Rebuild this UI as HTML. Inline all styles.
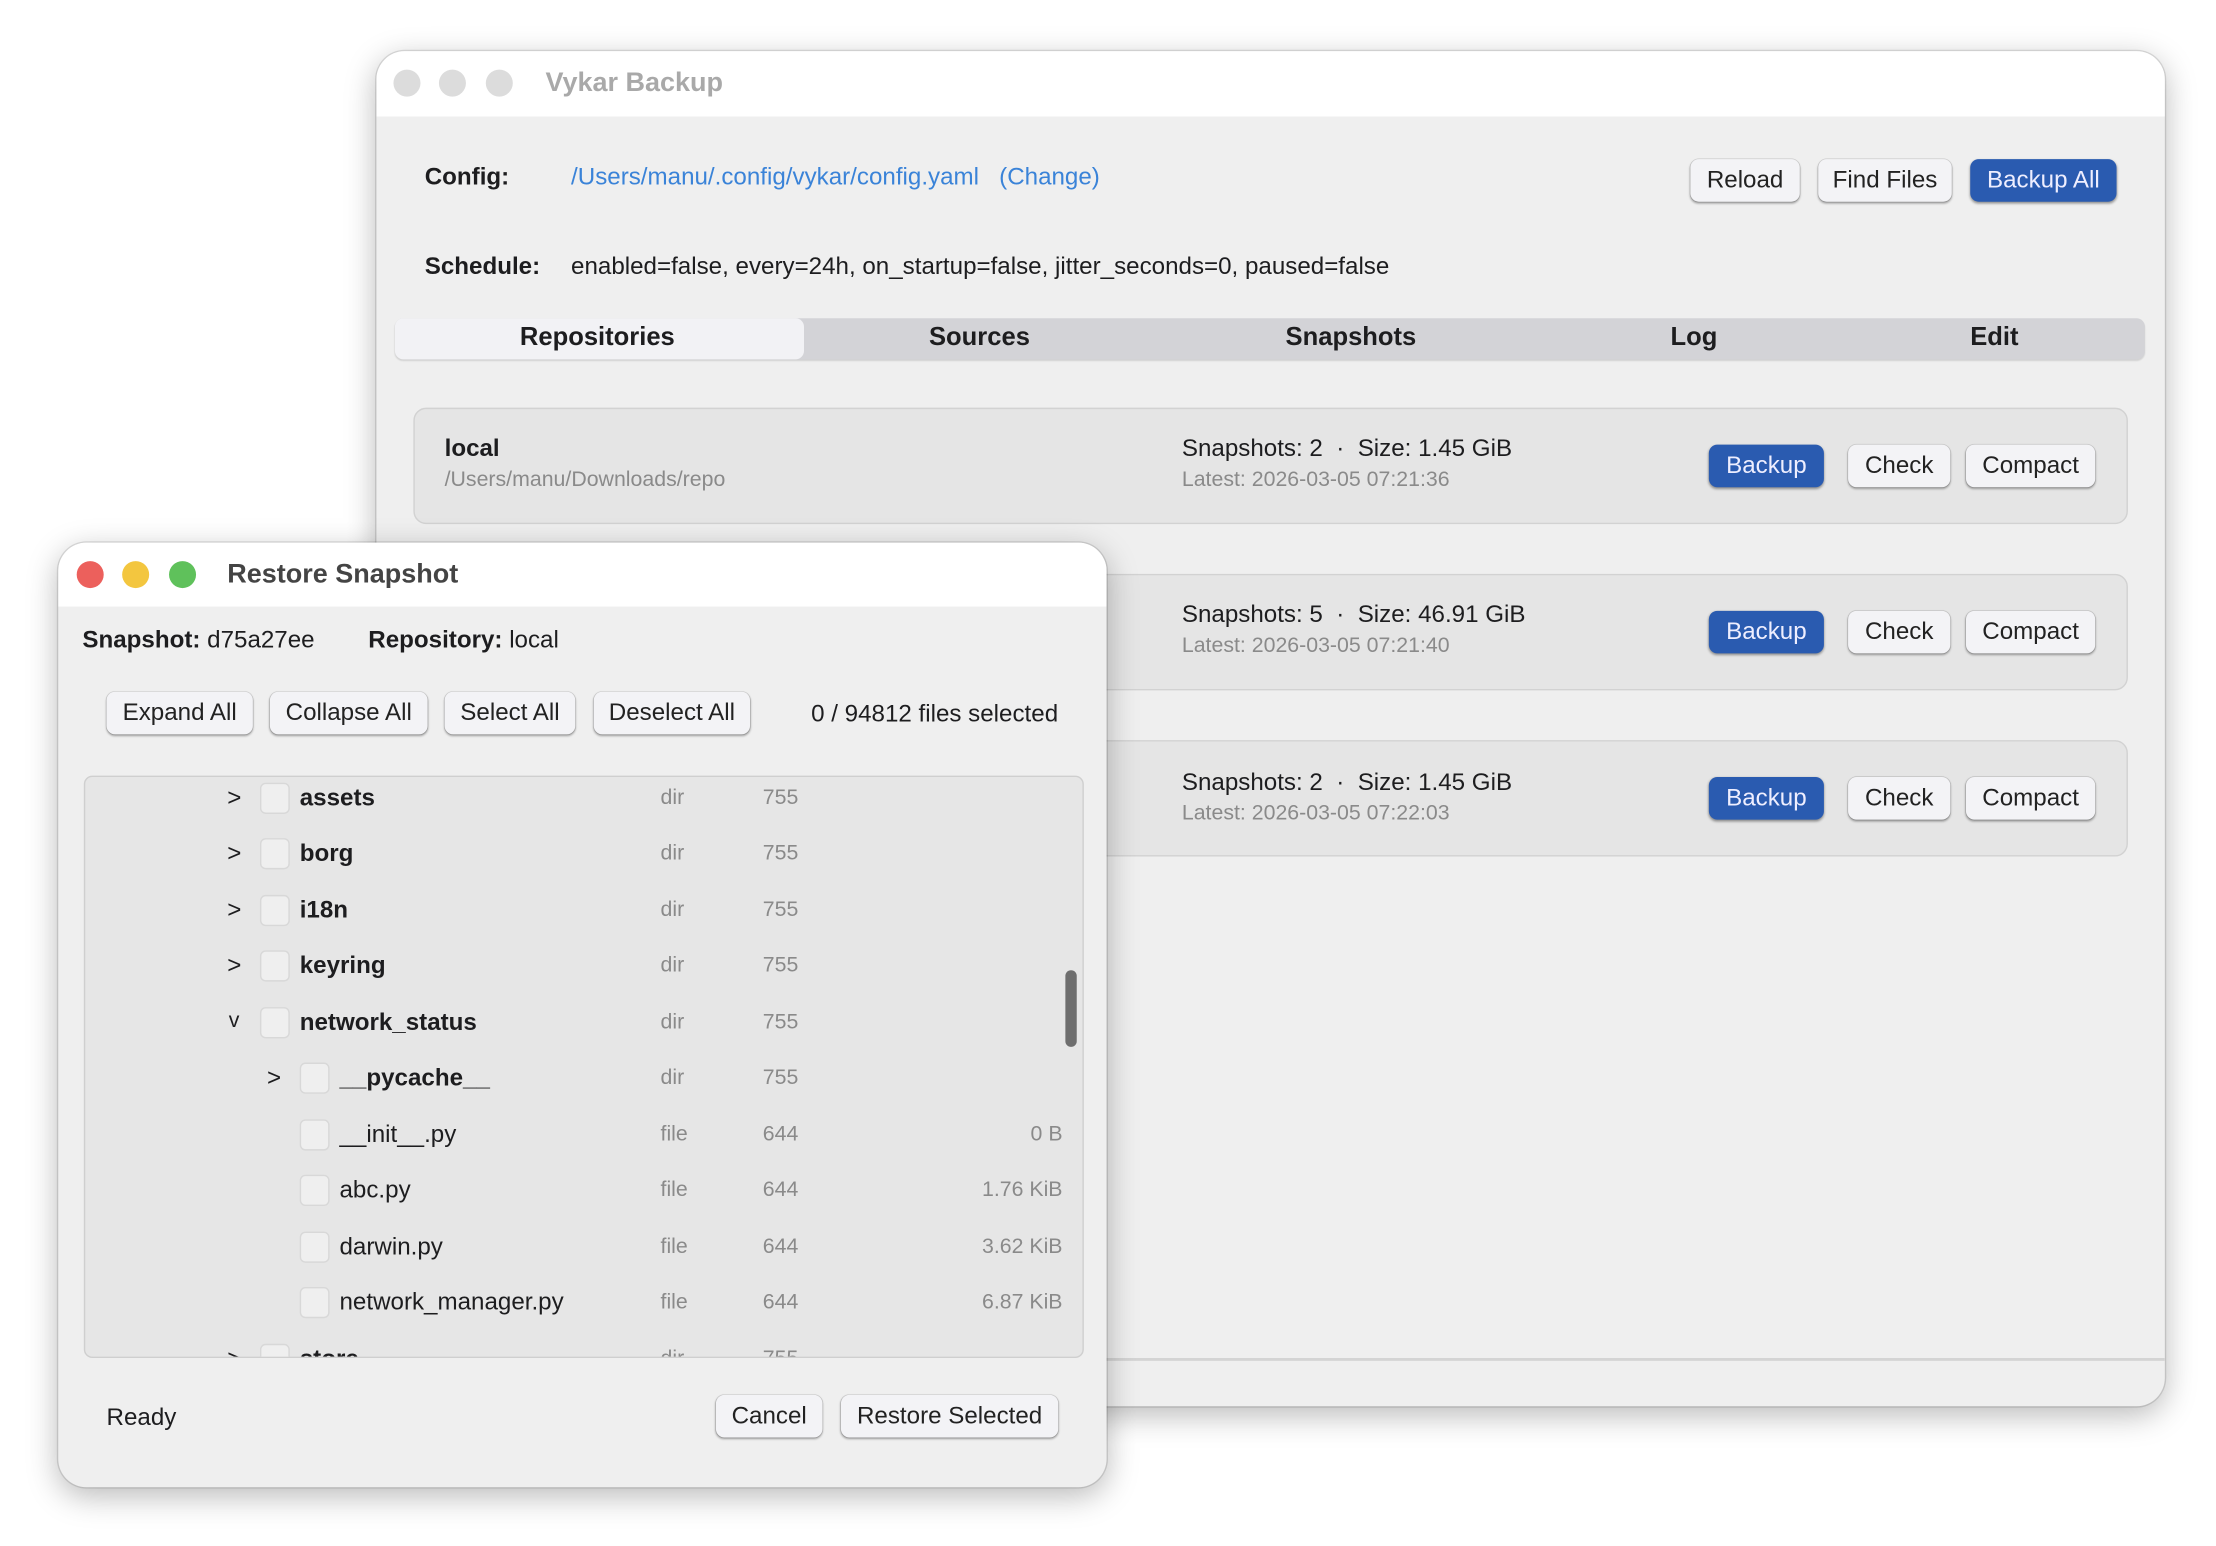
<!DOCTYPE html>
<html><head><meta charset="utf-8"><style>
*{box-sizing:border-box;margin:0;padding:0}
html,body{width:2216px;height:1546px;background:#fff;overflow:hidden}
#s{position:absolute;left:0;top:0;width:1560px;height:1088px;transform:scale(1.4205);transform-origin:0 0;font-family:"Liberation Sans",sans-serif;color:#1d1d1f}
.a{position:absolute;white-space:nowrap}
.win{position:absolute;background:#efefef;border-radius:20px;overflow:hidden;box-shadow:0 6px 22px rgba(0,0,0,.28),0 0 0 1px rgba(0,0,0,.12)}
.tb{position:absolute;left:0;top:0;right:0;background:#fff}
.dot{position:absolute;width:19px;height:19px;border-radius:50%}
.btn{position:absolute;height:30px;border-radius:6px;background:#f3f3f6;box-shadow:0 1px 1.5px rgba(0,0,0,.35),0 0 0 .5px rgba(0,0,0,.12);font-size:17px;line-height:30px;text-align:center;color:#222}
.blue{background:#2a5bb0;color:#eef;box-shadow:0 1px 2px rgba(0,0,0,.4)}
.card{position:absolute;left:26px;width:1207px;height:82px;background:#e5e5e5;border:1.5px solid #d2d2d2;border-radius:9px}
.b{font-weight:bold}
.g{color:#8a8a8a}
.cb{position:absolute;width:21px;height:22px;border-radius:4px;background:#efefef;border:1px solid #d8d8d8}
.row{position:absolute;left:0;width:700px;height:40px;font-size:17px}
</style></head><body><div id="s">

<div class="win" style="left:265px;top:36px;width:1259px;height:954px">
 <div class="tb" style="height:46px"></div>
 <div class="dot" style="left:12px;top:13px;background:#dcdcdc"></div>
 <div class="dot" style="left:44px;top:13px;background:#dcdcdc"></div>
 <div class="dot" style="left:77px;top:13px;background:#dcdcdc"></div>
 <div class="a b" style="left:119px;top:12px;font-size:19px;color:#a9a9a9">Vykar Backup</div>
 <div class="a b" style="left:34px;top:79px;font-size:17px">Config:</div>
 <div class="a" style="left:137px;top:79px;font-size:17px;color:#3a83d8">/Users/manu/.config/vykar/config.yaml&nbsp;&nbsp;&nbsp;(Change)</div>
 <div class="btn" style="left:925px;top:76px;width:77px">Reload</div>
 <div class="btn" style="left:1015px;top:76px;width:94px">Find Files</div>
 <div class="btn blue" style="left:1122px;top:76px;width:103px">Backup All</div>
 <div class="a b" style="left:34px;top:142px;font-size:17px">Schedule:</div>
 <div class="a" style="left:137px;top:142px;font-size:17px">enabled=false, every=24h, on_startup=false, jitter_seconds=0, paused=false</div>
 <div class="a" style="left:13px;top:188px;width:1232px;height:29px;background:#d3d3d7;border-radius:6px;box-shadow:0 1px 1px rgba(0,0,0,.12)"></div>
 <div class="a" style="left:13px;top:188px;width:288px;height:29px;background:#f2f2f5;border-radius:6px"></div>
 <div class="a b" style="left:101px;top:191px;font-size:18px">Repositories</div>
 <div class="a b" style="left:389px;top:191px;font-size:18px">Sources</div>
 <div class="a b" style="left:640px;top:191px;font-size:18px">Snapshots</div>
 <div class="a b" style="left:911px;top:191px;font-size:18px">Log</div>
 <div class="a b" style="left:1122px;top:191px;font-size:18px">Edit</div>

 <div class="card" style="top:251px"></div>
 <div class="card" style="top:368px"></div>
 <div class="card" style="top:485px"></div>
 <div class="a b" style="left:48px;top:270px;font-size:17px">local</div>
 <div class="a g" style="left:48px;top:293px;font-size:15px">/Users/manu/Downloads/repo</div>

 <div class="a" style="left:567px;top:270px;font-size:17px">Snapshots: 2 &nbsp;·&nbsp; Size: 1.45 GiB</div>
 <div class="a g" style="left:567px;top:293px;font-size:15px">Latest: 2026-03-05 07:21:36</div>
 <div class="a" style="left:567px;top:387px;font-size:17px">Snapshots: 5 &nbsp;·&nbsp; Size: 46.91 GiB</div>
 <div class="a g" style="left:567px;top:410px;font-size:15px">Latest: 2026-03-05 07:21:40</div>
 <div class="a" style="left:567px;top:505px;font-size:17px">Snapshots: 2 &nbsp;·&nbsp; Size: 1.45 GiB</div>
 <div class="a g" style="left:567px;top:528px;font-size:15px">Latest: 2026-03-05 07:22:03</div>

 <div class="btn blue" style="left:938px;top:277px;width:81px">Backup</div>
 <div class="btn" style="left:1036px;top:277px;width:72px">Check</div>
 <div class="btn" style="left:1119px;top:277px;width:91px">Compact</div>
 <div class="btn blue" style="left:938px;top:394px;width:81px">Backup</div>
 <div class="btn" style="left:1036px;top:394px;width:72px">Check</div>
 <div class="btn" style="left:1119px;top:394px;width:91px">Compact</div>
 <div class="btn blue" style="left:938px;top:511px;width:81px">Backup</div>
 <div class="btn" style="left:1036px;top:511px;width:72px">Check</div>
 <div class="btn" style="left:1119px;top:511px;width:91px">Compact</div>
 <div class="a" style="left:0;top:920px;width:1259px;height:1.5px;background:#d4d4d4"></div>
</div>

<div class="win" style="left:41px;top:382px;width:738px;height:665px">
 <div class="tb" style="height:45px"></div>
 <div class="dot" style="left:13px;top:13px;background:#ec605c"></div>
 <div class="dot" style="left:45px;top:13px;background:#f3c63f"></div>
 <div class="dot" style="left:78px;top:13px;background:#5fc15b"></div>
 <div class="a b" style="left:119px;top:12px;font-size:19px;color:#444">Restore Snapshot</div>
 <div class="a" style="left:17px;top:59px;font-size:17px"><b>Snapshot:</b> d75a27ee&nbsp;&nbsp;&nbsp;&nbsp;&nbsp;&nbsp;&nbsp;&nbsp;<b>Repository:</b> local</div>
 <div class="btn" style="left:34px;top:105px;width:103px">Expand All</div>
 <div class="btn" style="left:149px;top:105px;width:111px">Collapse All</div>
 <div class="btn" style="left:272px;top:105px;width:92px">Select All</div>
 <div class="btn" style="left:377px;top:105px;width:110px">Deselect All</div>
 <div class="a" style="left:530px;top:111px;font-size:17px">0 / 94812 files selected</div>

 <div class="a" style="left:18px;top:164px;width:704px;height:410px;background:#e6e6e6;border:1.5px solid #cfcfcf;border-radius:6px;overflow:hidden">
  <div class="row" style="top:-5px"><span class="a" style="left:100px;top:10px">&gt;</span><div class="cb" style="left:123px;top:9px"></div><span class="a b" style="left:151px;top:10px">assets</span><span class="a g" style="left:405px;top:11px;font-size:15px">dir</span><span class="a g" style="left:477px;top:11px;font-size:15px">755</span></div>
  <div class="row" style="top:34px"><span class="a" style="left:100px;top:10px">&gt;</span><div class="cb" style="left:123px;top:9px"></div><span class="a b" style="left:151px;top:10px">borg</span><span class="a g" style="left:405px;top:11px;font-size:15px">dir</span><span class="a g" style="left:477px;top:11px;font-size:15px">755</span></div>
  <div class="row" style="top:74px"><span class="a" style="left:100px;top:10px">&gt;</span><div class="cb" style="left:123px;top:9px"></div><span class="a b" style="left:151px;top:10px">i18n</span><span class="a g" style="left:405px;top:11px;font-size:15px">dir</span><span class="a g" style="left:477px;top:11px;font-size:15px">755</span></div>
  <div class="row" style="top:113px"><span class="a" style="left:100px;top:10px">&gt;</span><div class="cb" style="left:123px;top:9px"></div><span class="a b" style="left:151px;top:10px">keyring</span><span class="a g" style="left:405px;top:11px;font-size:15px">dir</span><span class="a g" style="left:477px;top:11px;font-size:15px">755</span></div>
  <div class="row" style="top:153px"><span class="a" style="left:101px;top:10px;font-size:15px">v</span><div class="cb" style="left:123px;top:9px"></div><span class="a b" style="left:151px;top:10px">network_status</span><span class="a g" style="left:405px;top:11px;font-size:15px">dir</span><span class="a g" style="left:477px;top:11px;font-size:15px">755</span></div>
  <div class="row" style="top:192px"><span class="a" style="left:128px;top:10px">&gt;</span><div class="cb" style="left:151px;top:9px"></div><span class="a b" style="left:179px;top:10px">__pycache__</span><span class="a g" style="left:405px;top:11px;font-size:15px">dir</span><span class="a g" style="left:477px;top:11px;font-size:15px">755</span></div>
  <div class="row" style="top:232px"><div class="cb" style="left:151px;top:9px"></div><span class="a" style="left:179px;top:10px">__init__.py</span><span class="a g" style="left:405px;top:11px;font-size:15px">file</span><span class="a g" style="left:477px;top:11px;font-size:15px">644</span><span class="a g" style="right:12px;top:11px;font-size:15px">0 B</span></div>
  <div class="row" style="top:271px"><div class="cb" style="left:151px;top:9px"></div><span class="a" style="left:179px;top:10px">abc.py</span><span class="a g" style="left:405px;top:11px;font-size:15px">file</span><span class="a g" style="left:477px;top:11px;font-size:15px">644</span><span class="a g" style="right:12px;top:11px;font-size:15px">1.76 KiB</span></div>
  <div class="row" style="top:311px"><div class="cb" style="left:151px;top:9px"></div><span class="a" style="left:179px;top:10px">darwin.py</span><span class="a g" style="left:405px;top:11px;font-size:15px">file</span><span class="a g" style="left:477px;top:11px;font-size:15px">644</span><span class="a g" style="right:12px;top:11px;font-size:15px">3.62 KiB</span></div>
  <div class="row" style="top:350px"><div class="cb" style="left:151px;top:9px"></div><span class="a" style="left:179px;top:10px">network_manager.py</span><span class="a g" style="left:405px;top:11px;font-size:15px">file</span><span class="a g" style="left:477px;top:11px;font-size:15px">644</span><span class="a g" style="right:12px;top:11px;font-size:15px">6.87 KiB</span></div>
  <div class="row" style="top:390px"><span class="a" style="left:100px;top:10px">&gt;</span><div class="cb" style="left:123px;top:9px"></div><span class="a b" style="left:151px;top:10px">store</span><span class="a g" style="left:405px;top:11px;font-size:15px">dir</span><span class="a g" style="left:477px;top:11px;font-size:15px">755</span></div>
  <div class="a" style="left:690px;top:136px;width:8px;height:54px;border-radius:4px;background:#6e6e6e"></div>
 </div>

 <div class="a" style="left:34px;top:606px;font-size:17px">Ready</div>
 <div class="btn" style="left:463px;top:600px;width:75px">Cancel</div>
 <div class="btn" style="left:551px;top:600px;width:153px">Restore Selected</div>
</div>
</div></body></html>
